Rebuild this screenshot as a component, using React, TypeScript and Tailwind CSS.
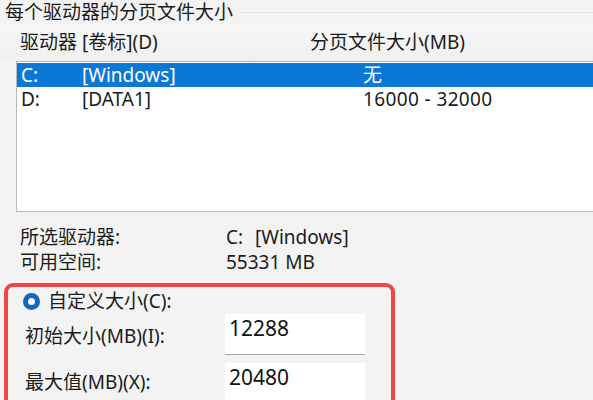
const rows = [
  { drive: "C:", label: "[Windows]", size: "无", selected: true },
  { drive: "D:", label: "[DATA1]", size: "16000 - 32000", selected: false },
]

function Radio() {
  return (
    <span className="flex h-[17px] w-[17px] items-center justify-center rounded-full bg-[#0f67c2]">
      <span className="h-[7px] w-[7px] rounded-full bg-white" />
    </span>
  )
}

export default function App() {
  return (
    <div
      className="h-[400px] w-[593px] overflow-hidden bg-[#f3f3f3] text-[19px] text-[#1b1b1b]"
      style={{ fontFamily: '"Noto Sans", "Noto Sans CJK SC", sans-serif' }}
    >
      {/* group title */}
      <div className="flex h-[24px] items-center">
        <span className="pl-[5px] pr-[8px] leading-none">每个驱动器的分页文件大小</span>
        <div className="mt-[1px] h-px flex-1 bg-[#e2e2e2]" />
      </div>

      {/* column headers */}
      <div className="flex h-[37px] items-center bg-gradient-to-b from-[#f7f7f7] to-[#f0f0f0] pl-[20px] leading-none">
        <span className="w-[290px]">驱动器 [卷标](D)</span>
        <span>分页文件大小(MB)</span>
      </div>

      {/* drive list */}
      <div className="ml-[16px] h-[151px] border-b border-l border-t border-[#b9b9b9] border-t-[#9fb8d8] bg-white pt-[1px]">
        {rows.map((r) => (
          <div
            key={r.drive}
            className={
              r.selected
                ? "flex h-[24px] items-center bg-[#0b78d6] pl-[4px] leading-none text-white"
                : "flex h-[24px] items-center pl-[4px] leading-none"
            }
          >
            <span className="w-[61px]">{r.drive}</span>
            <span className="w-[281px]">{r.label}</span>
            <span className="tracking-[0.02em]">{r.size}</span>
          </div>
        ))}
      </div>

      {/* selected drive info */}
      <div className="grid grid-cols-[206px_1fr] gap-y-[1px] pl-[20px] pt-[13px] leading-none">
        <span className="flex h-[24px] items-center">所选驱动器:</span>
        <span className="flex h-[24px] items-center">
          <span className="w-[29px]">C:</span>
          <span>[Windows]</span>
        </span>
        <span className="flex h-[24px] items-center">可用空间:</span>
        <span className="flex h-[24px] items-center">55331 MB</span>
      </div>

      {/* custom size box */}
      <div className="ml-[4px] mt-[9px] h-[140px] w-[391px] rounded-[9px] border-[4px] border-[#ec4747] pl-[12px] pt-[2px]">
        <div className="flex h-[24px] items-center gap-[8px] pl-[3px] leading-none">
          <Radio />
          <span>自定义大小(C):</span>
        </div>
        <div className="mt-[1px] flex items-center">
          <span className="w-[205px] pl-[5px] pt-[4px] leading-none">初始大小(MB)(I):</span>
          <div className="h-[41px] w-[140px] border-b border-[#a6a6a6] bg-white pl-[4px] pt-[1px] text-[21px] leading-[26px] text-[#111]">
            12288
          </div>
        </div>
        <div className="mt-[8px] flex items-start">
          <span className="w-[205px] pl-[5px] pt-[10px] leading-none">最大值(MB)(X):</span>
          <div className="h-[48px] w-[140px] bg-white pl-[4px] pt-[1px] text-[21px] leading-[26px] text-[#111]">
            20480
          </div>
        </div>
      </div>
    </div>
  )
}
